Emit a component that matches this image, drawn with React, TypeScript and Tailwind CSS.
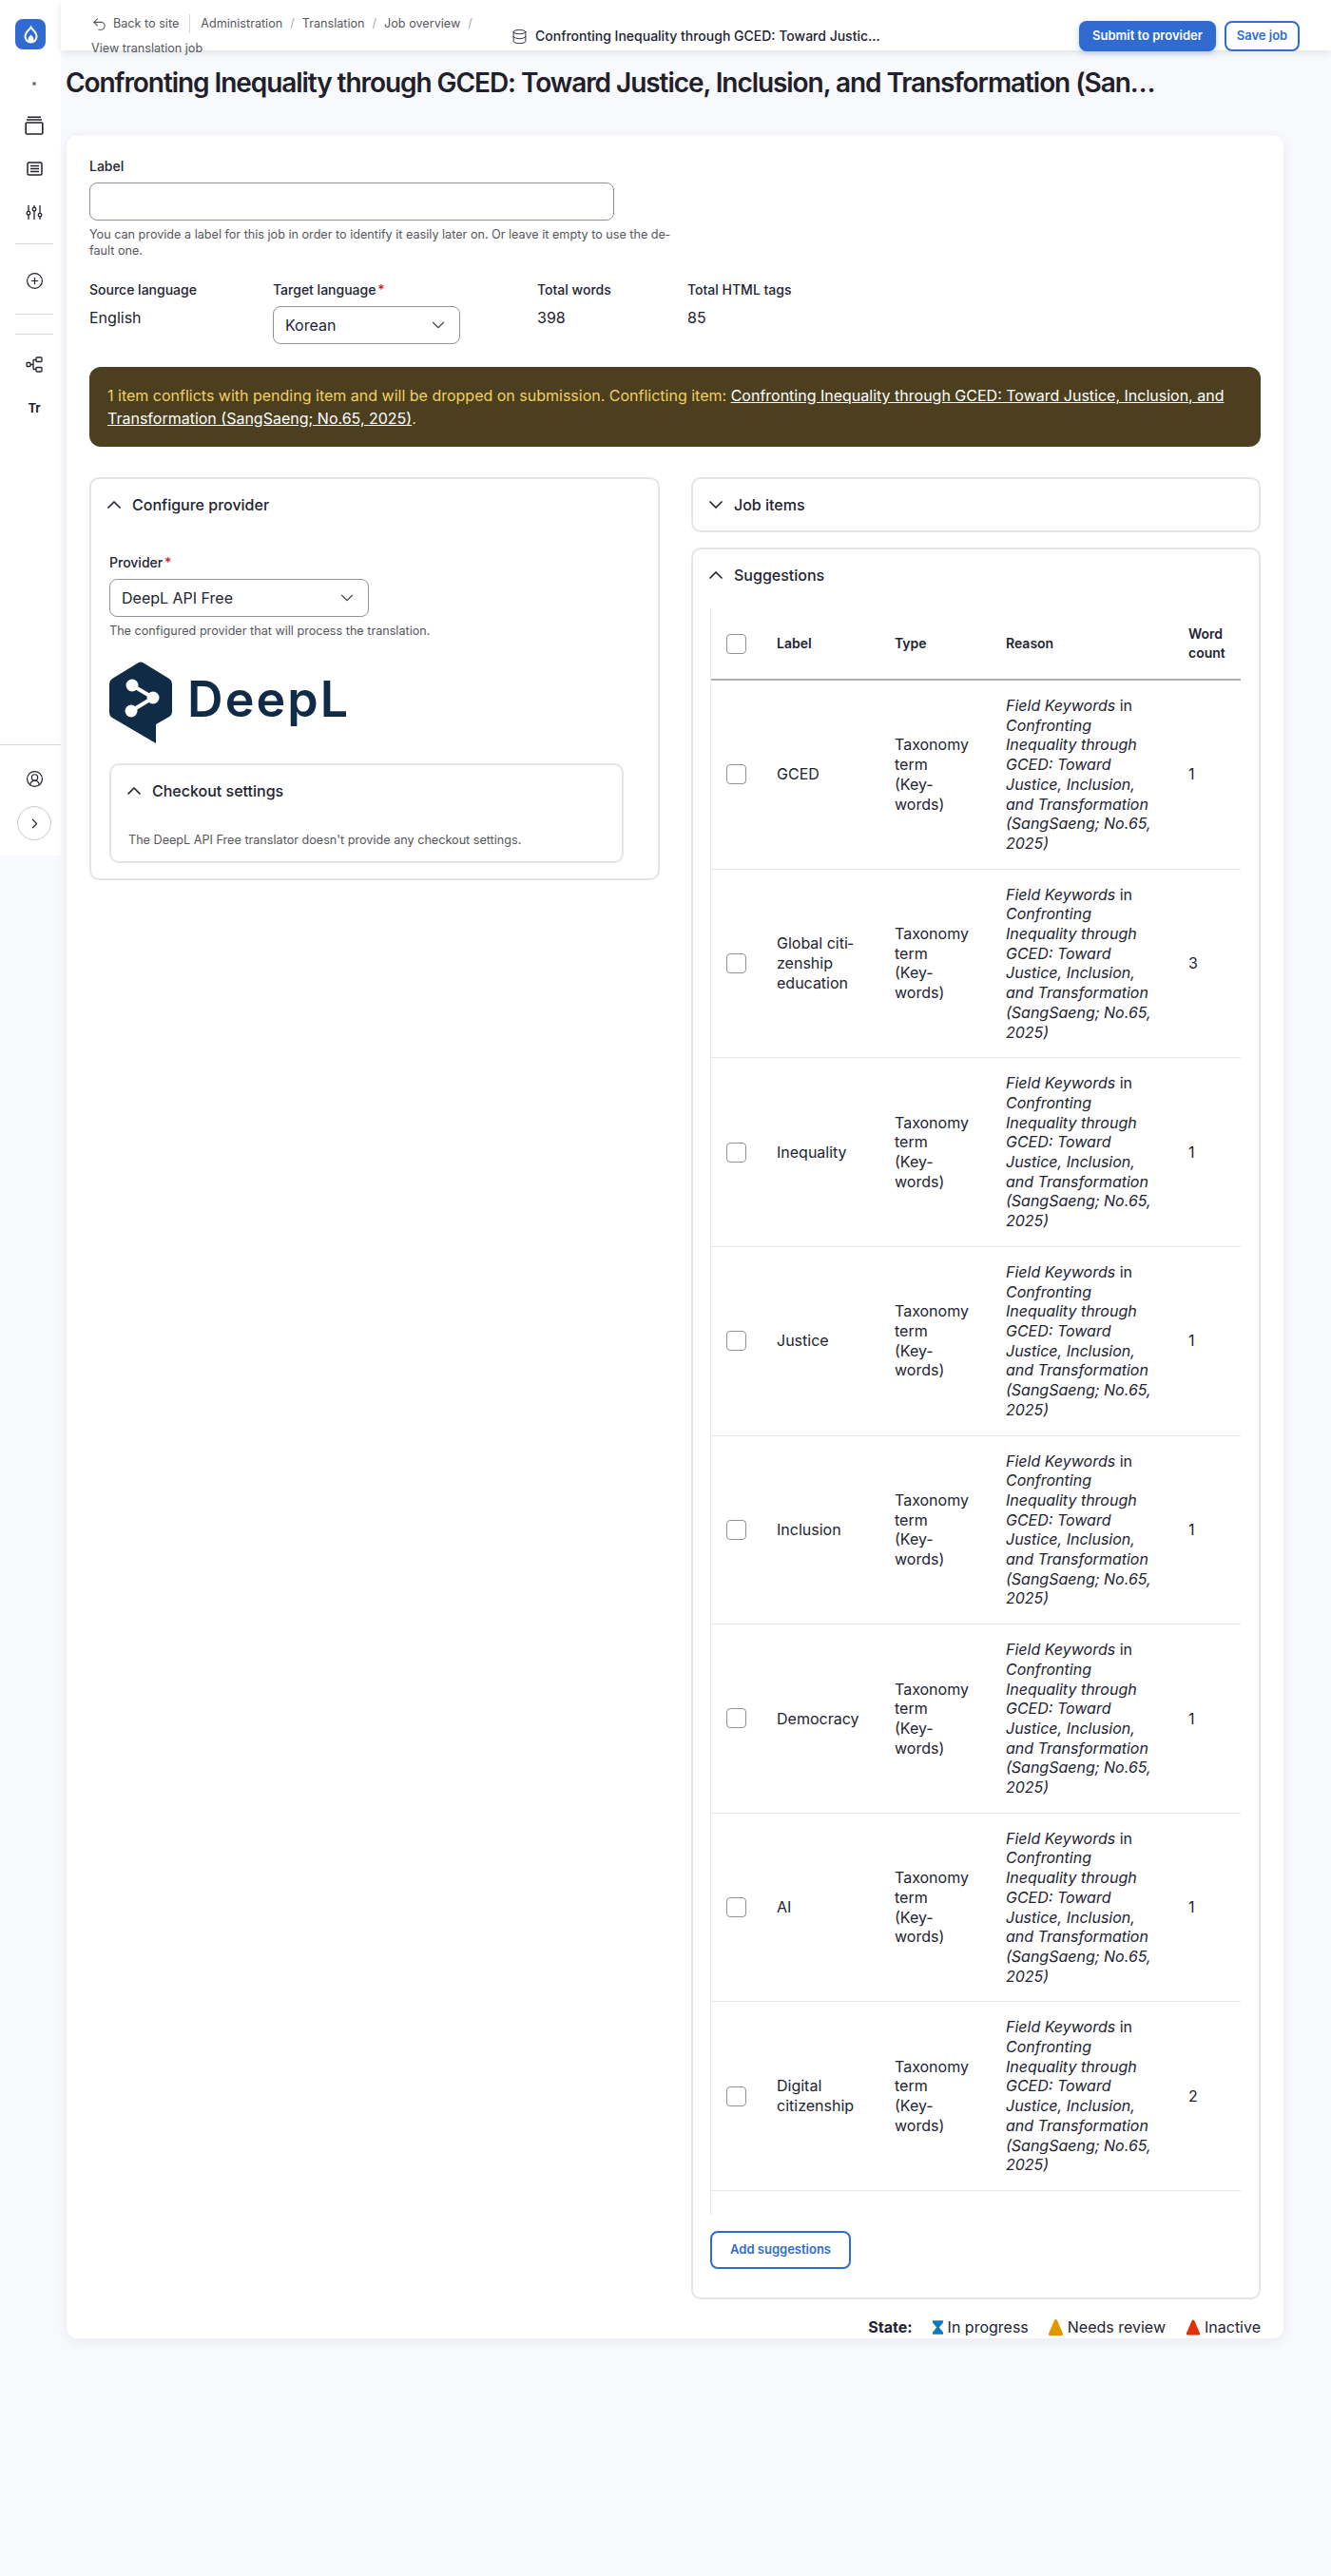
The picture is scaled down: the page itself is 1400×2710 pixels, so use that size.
import { ChevronDown, ChevronRight, ChevronUp, CirclePlus, CircleUserRound, Database, Undo2 } from "lucide-react";

const rows = [
  { label: "GCED", count: 1 },
  { label: "Global citi\u00ADzenship education", count: 3 },
  { label: "Inequality", count: 1 },
  { label: "Justice", count: 1 },
  { label: "Inclusion", count: 1 },
  { label: "Democracy", count: 1 },
  { label: "AI", count: 1 },
  { label: "Digital citizenship", count: 2 },
];

function Checkbox() {
  return <input type="checkbox" className="block h-[21px] w-[21px] appearance-none rounded-[4px] border border-[#8e929c] bg-white" />;
}

function Select({ value, className }: { value: string; className: string }) {
  return (
    <div className={`flex h-10 items-center justify-between rounded-lg border border-[#8e929c] pl-3 pr-[11px] text-base text-[#222330] ${className}`}>
      {value}
      <ChevronDown size={22} strokeWidth={1.2} className="text-[#44454d]" />
    </div>
  );
}

function Summary({ title, open }: { title: string; open?: boolean }) {
  const Icon = open ? ChevronUp : ChevronDown;
  return (
    <div className="flex h-[54px] items-center gap-[7px] pl-3 text-base font-medium text-[#222330]">
      <Icon size={24} strokeWidth={1.7} />
      {title}
    </div>
  );
}

function DeepLLogo() {
  return (
    <div className="mt-6 flex h-[86px] items-start">
      <svg width="66" height="86" viewBox="0 0 66 86">
        <path d="M30 1.5q3-1.8 6 0L63 18q3 2 3 5v30q0 3-3 5L49 66v20L3 59q-3-2-3-5V23q0-3 3-5Z" fill="#0f2b46" />
        <path d="M24 25 46 38M23 52 46 38" stroke="#fff" strokeWidth="4" />
        <circle cx="24" cy="25" r="6.5" fill="#fff" />
        <circle cx="46" cy="38" r="6.5" fill="#fff" />
        <circle cx="23" cy="52" r="6.5" fill="#fff" />
      </svg>
      <span className="ml-[16px] mt-[9px] text-[52px] leading-[62px] font-semibold tracking-[0.04em] text-[#0f2b46]">DeepL</span>
    </div>
  );
}

function Sidebar() {
  const line = "ml-2 h-px w-10 self-start bg-[#d8d9dd]";
  return (
    <aside className="flex h-[900px] w-16 shrink-0 flex-col items-center bg-white pl-2 text-[#22232b]">
      <div className="mt-5 ml-2 flex h-8 w-8 items-center justify-center self-start rounded-lg bg-[#2f6bd1]">
        <svg width="15" height="19" viewBox="0 0 15 19" fill="none">
          <path d="M7.5 1.5C8.5 4 13.5 6.5 13.5 11.5a6 6 0 0 1-12 0C1.500 6.500 6.500 4 7.500 1.500Z" stroke="#fff" strokeWidth="2" />
          <path d="M7.500 9.500c1 1.500 3 2.500 3 4.500a3 3 0 0 1-6 0c0-2 2-3 3-4.500Z" fill="#fff" />
        </svg>
      </div>
      <div className="mt-[34px] h-1 w-1 rounded-full bg-[#777a80]" />
      <svg className="mt-[32px]" width="20" height="20" viewBox="0 0 20 20" fill="none" stroke="currentColor" strokeWidth="1.600">
        <rect x="1.200" y="7" width="17.600" height="12" rx="1" />
        <path d="M3 1.200h14M2 4h16" />
      </svg>
      <svg className="mt-[28px]" width="17" height="15" viewBox="0 0 17 15" fill="none" stroke="currentColor" strokeWidth="1.500">
        <rect x="1" y="1" width="15" height="13" rx="1.500" />
        <path d="M4 4.500h9M4 7.500h9M4 10.500h9" />
      </svg>
      <svg className="mt-[30px]" width="18" height="17" viewBox="0 0 18 17" fill="none" stroke="currentColor" strokeWidth="1.300">
        <path d="M3 1v6.500M3 11v5M9 1v2.500M9 7v9M15 1v8.500M15 13v3" />
        <circle cx="3" cy="9.200" r="1.800" />
        <circle cx="9" cy="5.200" r="1.800" />
        <circle cx="15" cy="11.200" r="1.800" />
      </svg>
      <div className={`${line} mt-[24px]`} />
      <CirclePlus className="mt-[29px]" size={19} strokeWidth={1.500} />
      <div className={`${line} mt-[25px]`} />
      <div className={`${line} mt-5`} />
      <svg className="mt-[23px]" width="18" height="17" viewBox="0 0 18 17" fill="none" stroke="currentColor" strokeWidth="1.300">
        <rect x="1" y="6.500" width="4" height="4" rx="1" />
        <rect x="11" y="1" width="6" height="4.500" rx="1" />
        <rect x="11" y="11.500" width="6" height="4.500" rx="1" />
        <path d="M5 8.500h3M8 3.500v10M8 3.500h3M8 13.500h3" />
      </svg>
      <div className="mt-[29px] text-[13px] font-bold leading-[16px]">Tr</div>
      <div className="mt-auto -ml-2 h-px w-16 self-start bg-[#d8d9dd]" />
      <CircleUserRound className="mt-[26px]" size={19} strokeWidth={1.500} />
      <div className="mt-[19px] mb-4 flex h-9 w-9 items-center justify-center rounded-full border border-[#c9cad0]">
        <ChevronRight size={17} strokeWidth={1.500} />
      </div>
    </aside>
  );
}

function TopBar() {
  return (
    <header className="relative z-10 flex h-[53px] bg-white pl-8 pr-[33px] shadow-[0_2px_8px_rgba(0,0,0,0.1)]">
      <nav className="flex w-[442px] shrink-0 flex-wrap content-start items-center pt-3 text-[12.64px] leading-[26px] text-[#55565b]">
        <Undo2 className="mr-[6px]" size={17} strokeWidth={1.500} />
        <span>Back to site</span>
        <span className="ml-[11px] mr-[11px] h-5 w-px bg-[#d3d4d9]" />
        <span>Administration</span>
        <span className="mx-2 text-[#a9aab0]">/</span>
        <span>Translation</span>
        <span className="mx-2 text-[#a9aab0]">/</span>
        <span>Job overview</span>
        <span className="mx-2 text-[#a9aab0]">/</span>
        <span className="w-full">View translation job</span>
      </nav>
      <div className="mt-[22px] flex h-8 items-center gap-2 text-sm font-medium text-[#222330]">
        <Database size={17} strokeWidth={1.300} />
        Confronting Inequality through GCED: Toward Justic…
      </div>
      <div className="ml-auto mt-[22px] flex h-8 gap-[9px] text-[13px] font-semibold">
        <button className="w-[144px] rounded-lg bg-[#2f6bd1] text-white shadow-[0_2px_6px_rgba(47,107,209,0.3)]">Submit to provider</button>
        <button className="w-[79px] rounded-lg border-2 border-[#2f6bd1] bg-white text-[#2f6bd1]">Save job</button>
      </div>
    </header>
  );
}

function SuggestionsTable() {
  return (
    <div className="mx-[18px] mt-2 border-l border-[#e6e7ea] pb-[25px]">
      <table className="w-[557px] table-fixed border-collapse text-left text-base text-[#222330]">
        <colgroup>
          <col className="w-[53px]" />
          <col className="w-[124px]" />
          <col className="w-[117px]" />
          <col className="w-[192px]" />
          <col className="w-[71px]" />
        </colgroup>
        <thead>
          <tr className="h-[75px] border-b-2 border-[#aeafb3] text-sm leading-[20px] font-semibold">
            <th className="pl-4"><Checkbox /></th>
            <th className="px-4 font-semibold">Label</th>
            <th className="px-4 font-semibold">Type</th>
            <th className="px-4 font-semibold">Reason</th>
            <th className="px-4 font-semibold">Word count</th>
          </tr>
        </thead>
        <tbody>
          {rows.map((row) => (
            <tr key={row.label} className="border-b border-[#e6e7ea] leading-[20.7px]">
              <td className="pl-4"><Checkbox /></td>
              <td className="px-4 hyphens-manual">{row.label}</td>
              <td className="px-4">Taxonomy<br />term<br />(Key-<br />words)</td>
              <td className="p-4 pr-3">
                <em>Field Keywords</em> in <em>Confronting Inequality through GCED: Toward Justice, Inclusion, and Transformation (SangSaeng; No.65, 2025)</em>
              </td>
              <td className="px-4">{row.count}</td>
            </tr>
          ))}
        </tbody>
      </table>
    </div>
  );
}

export default function App() {
  return (
    <div className="flex min-h-screen bg-[#f8f9fd] font-[Inter,sans-serif] text-[#222330]">
      <Sidebar />
      <main className="min-w-0 flex-1">
        <TopBar />
        <h1 className="ml-[5px] mt-[14px] text-[28px] leading-[40px] font-semibold tracking-[-0.038em] text-[#1f2029]">
          Confronting Inequality through GCED: Toward Justice, Inclusion, and Transformation (San…
        </h1>
        <section className="ml-[5px] mt-[34px] w-[1282px] rounded-xl border border-[#f0f1f4] bg-white px-6 pt-6 shadow-[0_4px_12px_rgba(0,0,0,0.05)]">
          <label className="block text-sm leading-[18px] font-medium">Label</label>
          <input className="mt-2 block h-10 w-[552px] rounded-lg border border-[#8e929c]" />
          <p className="mt-[6px] w-[615px] text-[12.64px] leading-[17px] text-[#55565b] hyphens-manual">
            You can provide a label for this job in order to identify it easily later on. Or leave it empty to use the de{"\u00AD"}fault one.
          </p>
          <div className="mt-6 flex">
            <div className="w-[193px]">
              <div className="text-sm leading-[18px] font-medium">Source language</div>
              <div className="mt-2 text-base leading-6">English</div>
            </div>
            <div className="w-[278px]">
              <div className="text-sm leading-[18px] font-medium">Target language <span className="-ml-[2px] text-[#d1202f]">*</span></div>
              <Select value="Korean" className="mt-2 w-[197px]" />
            </div>
            <div className="w-[158px]">
              <div className="text-sm leading-[18px] font-medium">Total words</div>
              <div className="mt-2 text-base leading-6">398</div>
            </div>
            <div>
              <div className="text-sm leading-[18px] font-medium">Total HTML tags</div>
              <div className="mt-2 text-base leading-6">85</div>
            </div>
          </div>
          <div className="mt-6 rounded-xl bg-[#4b3f1f] px-[19px] py-[18px] text-base leading-6 text-[#f0d060]">
            1 item conflicts with pending item and will be dropped on submission. Conflicting item:{" "}
            <a className="text-white underline">Confronting Inequality through GCED: Toward Justice, Inclusion, and Transformation (SangSaeng; No.65, 2025)</a>.
          </div>
          <div className="mt-8 flex items-start gap-[33px]">
            <div className="w-[600px] rounded-[10px] border-2 border-[#e4e5e8] pb-[16px]">
              <Summary title="Configure provider" open />
              <div className="px-[19px] pt-[25px]">
                <div className="text-sm leading-[18px] font-medium">Provider <span className="-ml-[2px] text-[#d1202f]">*</span></div>
                <Select value="DeepL API Free" className="mt-2 w-[273px]" />
                <p className="mt-[6px] text-[12.64px] leading-[17px] text-[#55565b]">The configured provider that will process the translation.</p>
                <DeepLLogo />
                <div className="mt-[21px] w-[541px] rounded-[10px] border-2 border-[#e4e5e8] pb-[14px]">
                  <Summary title="Checkout settings" open />
                  <p className="mt-4 pl-[18px] text-[12.64px] leading-[17px] text-[#55565b]">The DeepL API Free translator doesn't provide any checkout settings.</p>
                </div>
              </div>
            </div>
            <div className="w-[599px]">
              <div className="rounded-[10px] border-2 border-[#e4e5e8]">
                <Summary title="Job items" />
              </div>
              <div className="mt-4 rounded-[10px] border-2 border-[#e4e5e8] pb-[30px]">
                <Summary title="Suggestions" open />
                <SuggestionsTable />
                <button className="ml-[18px] mt-[17px] h-10 w-[148px] rounded-lg border-2 border-[#2f6bd1] text-[13px] font-semibold text-[#2f6bd1]">Add suggestions</button>
              </div>
            </div>
          </div>
          <div className="mt-[17px] flex h-6 items-center justify-end text-base">
            <b className="mr-[21px] font-bold">State:</b>
            <svg className="mr-[5px]" width="11" height="17" viewBox="0 0 13 17" fill="#0e7ac0">
              <path d="M0 0h13v2.500L8 8.500l5 6V17H0v-2.500l5-6-5-6Z" />
            </svg>
            In progress
            <svg className="ml-[21px] mr-[5px]" width="15" height="17" viewBox="0 0 15 17" fill="#e29700">
              <path d="M6 1q1.500-2 3 0l6 14q.5 2-1.500 2h-12q-2 0-1.500-2Z" />
            </svg>
            Needs review
            <svg className="ml-[22px] mr-[5px]" width="14" height="17" viewBox="0 0 15 17" fill="#e33000">
              <path d="M6 1q1.500-2 3 0l6 14q.5 2-1.500 2h-12q-2 0-1.500-2Z" />
            </svg>
            Inactive
          </div>
        </section>
      </main>
    </div>
  );
}
